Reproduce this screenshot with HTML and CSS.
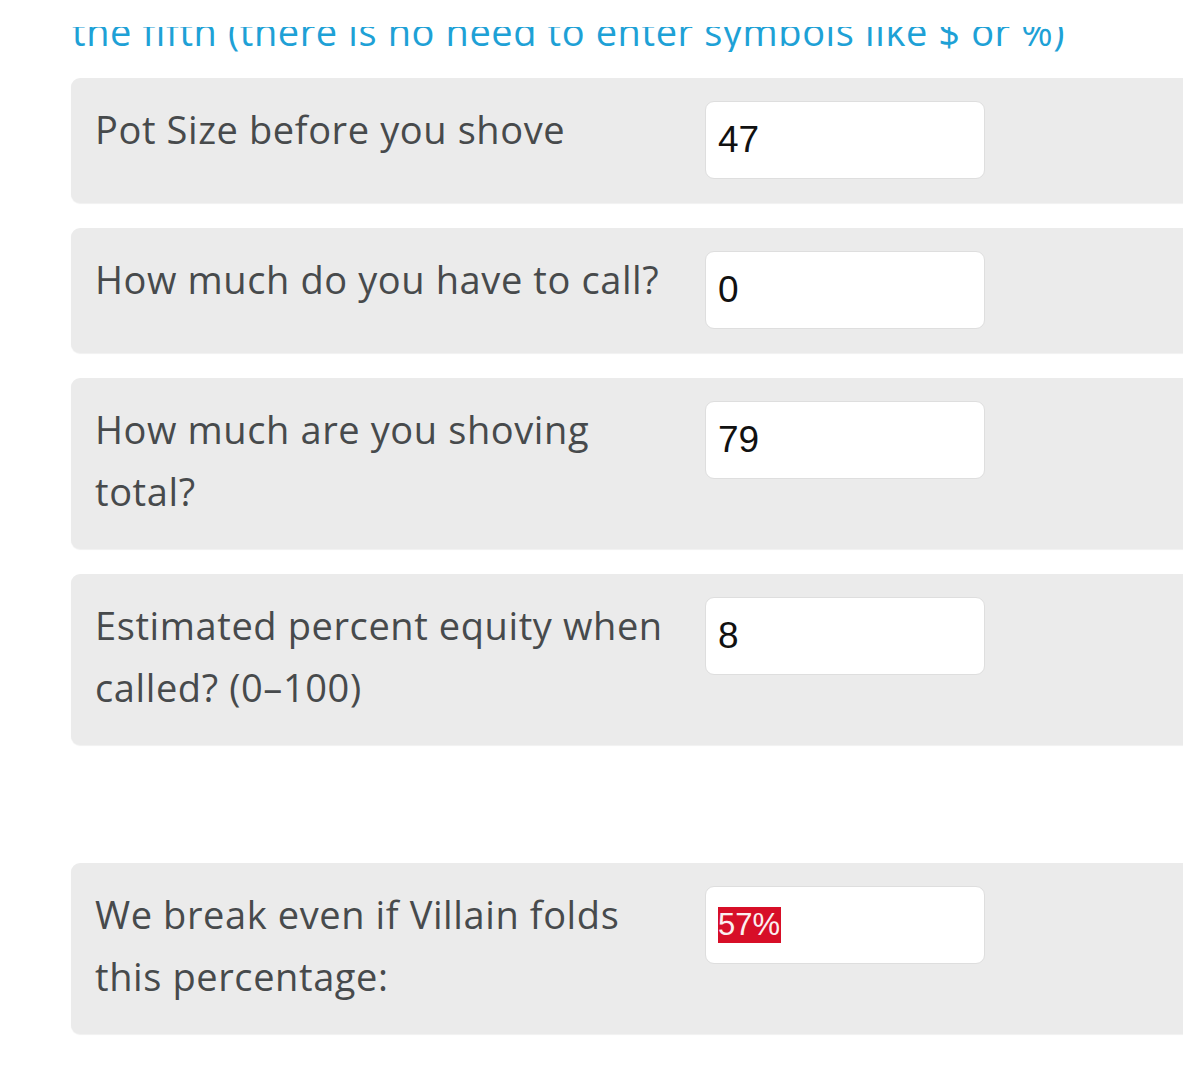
FILE: index.html
```html
<!DOCTYPE html>
<html lang="en">
<head>
<meta charset="utf-8">
<title>Shove calculator</title>
<link rel="stylesheet" href="styles.css">
</head>
<body>
<div class="page">
  <div class="intro-clip">
    <p class="intro">the fifth (there is no need to enter symbols like $ or %)</p>
  </div>
  <div class="form">
    <div class="row">
      <label class="label" for="pot">Pot Size before you shove</label>
      <input class="field" id="pot" type="text" value="47">
    </div>
    <div class="row">
      <label class="label" for="call">How much do you have to call?</label>
      <input class="field" id="call" type="text" value="0">
    </div>
    <div class="row">
      <label class="label" for="shove">How much are you shoving total?</label>
      <input class="field" id="shove" type="text" value="79">
    </div>
    <div class="row">
      <label class="label" for="equity">Estimated percent equity when called? (0–100)</label>
      <input class="field" id="equity" type="text" value="8">
    </div>
  </div>
  <div class="form result">
    <div class="row">
      <div class="label">We break even if Villain folds this percentage:</div>
      <div class="field output"><span class="selected">57%</span></div>
    </div>
  </div>
</div>
</body>
</html>
```

FILE: styles.css
```css
* { box-sizing: border-box; }

html, body {
  margin: 0;
  padding: 0;
  background: #ffffff;
  overflow: hidden;
}

.page {
  width: 1183px;
  height: 1074px;
  padding-top: 27px;
  padding-left: 71px;
  overflow: hidden;
}

.intro-clip {
  height: 25px;
  overflow: hidden;
}

.intro {
  margin: -21px 0 0 1px;
  font-family: "Open Sans", sans-serif;
  font-size: 38px;
  letter-spacing: 0.6px;
  line-height: 50px;
  color: #1ea1d6;
  white-space: nowrap;
}

.form {
  margin-top: 26px;
  width: 1200px;
  display: flex;
  flex-direction: column;
  gap: 25px;
}

.result {
  margin-top: 118px;
}

.row {
  display: flex;
  align-items: flex-start;
  background: #ebebeb;
  border-radius: 9px;
  padding: 23px 24px 24px 24px;
  box-shadow: 0 1px 1px rgba(0, 0, 0, 0.06);
}

.label {
  width: 584px;
  margin: -3px 26px 3px 0;
  font-family: "Open Sans", sans-serif;
  font-size: 38px;
  letter-spacing: 0.6px;
  line-height: 62px;
  color: #474a4c;
}

.field {
  width: 280px;
  height: 78px;
  flex: none;
  border: 1px solid #dedede;
  border-radius: 9px;
  background: #ffffff;
  padding: 0 12px;
  font-family: "Liberation Sans", Arial, sans-serif;
  font-size: 37px;
  color: #111111;
  outline: none;
}

.output {
  display: flex;
  align-items: center;
  font-size: 31px;
}

.selected {
  background: #d70e28;
  color: #fbeef0;
  line-height: 36px;
  padding: 0 1px 0 0;
}
```
